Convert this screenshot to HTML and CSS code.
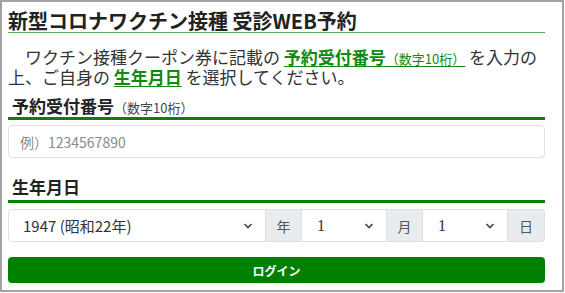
FILE: index.html
```html
<!DOCTYPE html>
<html lang="ja">
<head>
    <meta charset="utf-8">
    <title>新型コロナワクチン接種 受診WEB予約</title>
    <link rel="stylesheet" href="styles.css">
</head>
<body>
    <div class="frame">
        <h1>新型コロナワクチン接種 受診WEB予約</h1>

        <p class="lead">ワクチン接種クーポン券に記載の <a href="#no">予約受付番号<small>（数字10桁）</small></a> を入力の上、ご自身の <a href="#birth">生年月日</a> を選択してください。</p>

        <div class="label" id="no">予約受付番号<small>（数字10桁）</small></div>
        <input type="text" class="field" placeholder="例）1234567890">

        <div class="label" id="birth">生年月日</div>
        <div class="date-row">
            <select class="sel sel-year">
                <option>1947 (昭和22年)</option>
            </select>
            <span class="addon">年</span>
            <select class="sel sel-num">
                <option>1</option>
            </select>
            <span class="addon">月</span>
            <select class="sel sel-num">
                <option>1</option>
            </select>
            <span class="addon addon-last">日</span>
        </div>

        <button class="login">ログイン</button>
    </div>
</body>
</html>
```

FILE: styles.css
```css
html, body {
    margin: 0;
    padding: 0;
    background: #fff;
}
body {
    font-family: "Noto Sans CJK JP", "Noto Sans", sans-serif;
    color: #333;
}
.frame {
    box-sizing: border-box;
    width: 564px;
    height: 292px;
    border: 2px solid #a2a2a2;
    padding: 0 17px 0 6px;
    overflow: hidden;
}
h1 {
    margin: 7px 0 0;
    font-size: 20px;
    line-height: 23px;
    font-weight: bold;
    color: #222;
    border-bottom: 1px solid #5aad5a;
}
.lead {
    margin: 14px 0 0;
    font-size: 17px;
    line-height: 20px;
    text-indent: 1em;
    color: #333;
}
.lead a {
    color: #108a10;
    font-weight: bold;
    text-decoration: underline;
    text-underline-offset: 2px;
}
.lead a small {
    font-size: 13px;
    line-height: 1;
    font-weight: normal;
}
.label {
    margin-top: 9px;
    padding: 0 0 1px 4px;
    font-size: 17px;
    line-height: 20px;
    font-weight: bold;
    color: #222;
    border-bottom: 3px solid #0a7f0a;
}
.label small {
    font-size: 13px;
    line-height: 1;
    font-weight: normal;
    color: #444;
}
#birth {
    margin-top: 19px;
    padding-bottom: 3px;
}
.field {
    display: block;
    box-sizing: border-box;
    width: 100%;
    height: 33px;
    margin-top: 5px;
    padding: 0 11px;
    border: 1px solid #dde0e4;
    border-radius: 4px;
    font-family: "Noto Sans CJK JP", sans-serif;
    font-size: 14px;
    color: #333;
}
.field::placeholder {
    color: #8a8a8a;
}
.date-row {
    display: flex;
    margin-top: 6px;
    height: 33px;
}
.sel {
    -webkit-appearance: none;
    appearance: none;
    box-sizing: border-box;
    height: 33px;
    margin: 0;
    border: 1px solid #dde0e4;
    border-left: none;
    border-radius: 0;
    background: #fff url("data:image/svg+xml,%3Csvg xmlns='http://www.w3.org/2000/svg' width='10' height='6' viewBox='0 0 10 6'%3E%3Cpath d='M1.5 1l3.5 3.5L8.5 1' fill='none' stroke='%23444' stroke-width='1.6'/%3E%3C/svg%3E") no-repeat right 12px center;
    color: #333;
    font-size: 15px;
}
.sel-year {
    width: 258px;
    padding-left: 14px;
    border-left: 1px solid #dde0e4;
    border-radius: 4px 0 0 4px;
    font-family: "Noto Sans CJK JP", sans-serif;
}
.sel-num {
    width: 85px;
    padding-left: 15px;
    font-family: "Liberation Serif", "DejaVu Serif", serif;
    font-size: 16px;
}
.addon {
    box-sizing: border-box;
    width: 36px;
    display: flex;
    align-items: center;
    justify-content: center;
    background: #e9ecef;
    border: 1px solid #dde0e4;
    border-left: none;
    font-size: 14px;
    color: #555;
}
.addon-last {
    width: 37px;
    border-radius: 0 4px 4px 0;
}
.login {
    display: block;
    width: 100%;
    height: 26px;
    margin-top: 15px;
    border: none;
    border-radius: 4px;
    background: #008000;
    color: #fff;
    font-family: "Noto Sans CJK JP", sans-serif;
    font-size: 12px;
    font-weight: bold;
    cursor: pointer;
}
```
